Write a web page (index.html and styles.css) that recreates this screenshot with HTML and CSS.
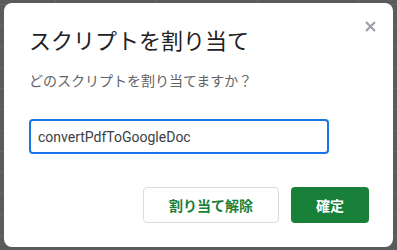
FILE: index.html
```html
<!DOCTYPE html>
<html>
<head>
<meta charset="UTF-8">
<meta name="viewport" content="width=device-width, initial-scale=1.0">
<title>スクリプトを割り当て</title>
<link rel="stylesheet" href="styles.css">
</head>
<body>

    <div class="dialog">
        <button class="close" aria-label="閉じる">
            <svg width="11" height="11" viewBox="0 0 11 11">
                <path d="M1 1 L10 10 M10 1 L1 10" stroke="#9aa0a6" stroke-width="2.2" fill="none"/>
            </svg>
        </button>
        <h1 class="title">スクリプトを割り当て</h1>
        <p class="prompt">どのスクリプトを割り当てますか？</p>
        <input class="field" type="text" value="convertPdfToGoogleDoc">
        <div class="actions">
            <button class="btn secondary">割り当て解除</button>
            <button class="btn primary">確定</button>
        </div>
    </div>

</body>
</html>
```

FILE: styles.css
```css
    :root {
        --ink: #202124;
        --muted: #5f6368;
        --green: #188038;
        --blue: #1a73e8;
    }
    body {
        margin: 0;
        width: 397px;
        height: 250px;
        overflow: hidden;
        font-family: Roboto, "Noto Sans CJK JP", sans-serif;
        background-color: #5b5b5b;
        background-image:
            linear-gradient(to right, #666 1px, transparent 1px),
            linear-gradient(to bottom, #666 1px, transparent 1px);
        background-size: 101px 21px;
        background-position: 55px 4px;
    }
    .dialog {
        position: relative;
        box-sizing: border-box;
        width: 389px;
        height: 244px;
        margin: 3px 0 0 4px;
        padding: 25px 24px 0 25px;
        background: white;
        border-radius: 8px;
    }
    .close {
        position: absolute;
        top: 18px;
        right: 17px;
        padding: 0;
        border: none;
        background: none;
        width: 11px;
        height: 11px;
        display: flex;
    }
    .title {
        margin: 0;
        font-size: 22px;
        font-weight: 400;
        line-height: 28px;
        color: var(--ink);
    }
    .prompt {
        margin: 15px 0 0;
        font-size: 14px;
        line-height: 20px;
        color: var(--muted);
    }
    .field {
        display: block;
        box-sizing: border-box;
        width: 300px;
        height: 35px;
        margin-top: 28px;
        padding: 0 7px;
        border: 2px solid var(--blue);
        border-radius: 4px;
        font-family: Roboto, sans-serif;
        font-size: 14px;
        color: #3c4043;
        outline: none;
    }
    .actions {
        display: flex;
        justify-content: flex-end;
        gap: 12px;
        margin-top: 33px;
    }
    .btn {
        box-sizing: border-box;
        height: 36px;
        border-radius: 4px;
        font-family: Roboto, "Noto Sans CJK JP", sans-serif;
        font-size: 14px;
        font-weight: 700;
        padding: 0;
    }
    .secondary {
        width: 136px;
        background: white;
        border: 1px solid #dadce0;
        color: var(--green);
    }
    .primary {
        width: 78px;
        background: var(--green);
        border: none;
        color: white;
    }
```
